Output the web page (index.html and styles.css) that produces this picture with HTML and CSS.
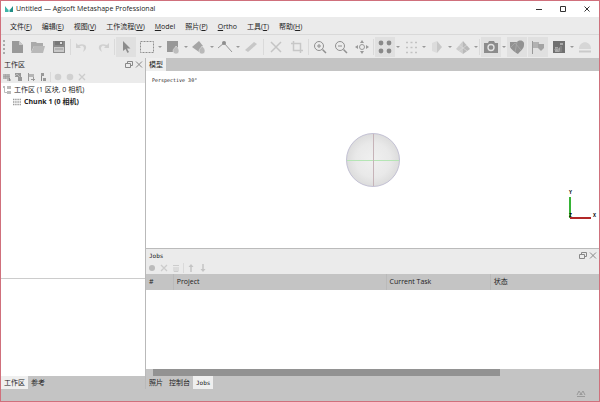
FILE: index.html
```html
<!DOCTYPE html>
<html lang="zh-CN">
<head>
<meta charset="utf-8">
<title>Untitled — Agisoft Metashape Professional</title>
<link rel="stylesheet" href="styles.css">
</head>
<body>
<div class="window">
  <header class="titlebar">
    <svg class="logo" viewBox="0 0 10 8"><path d="M1 2l4 3 4-3v5H1z" fill="#8fd8d0"/><path d="M1 1l3 4v2H1z" fill="#3fb5a8"/><path d="M9 1L6 5v2h3z" fill="#238f87"/></svg>
    <h1>Untitled — Agisoft Metashape Professional</h1>
    <div class="controls">
      <button aria-label="最小化"><svg viewBox="0 0 8 8"><path d="M1 4.500h6"/></svg></button>
      <button aria-label="最大化"><svg viewBox="0 0 8 8"><path d="M1.500 1.500h5v5h-5z"/></svg></button>
      <button aria-label="关闭"><svg viewBox="0 0 8 8"><path d="M1.500 1.500l5 5m0-5l-5 5"/></svg></button>
    </div>
  </header>

  <nav class="menubar">
    <button>文件(<u>F</u>)</button>
    <button>编辑(<u>E</u>)</button>
    <button>视图(<u>V</u>)</button>
    <button>工作流程(<u>W</u>)</button>
    <button><u>M</u>odel</button>
    <button>照片(<u>P</u>)</button>
    <button><u>O</u>rtho</button>
    <button>工具(<u>T</u>)</button>
    <button>帮助(<u>H</u>)</button>
  </nav>

  <div class="toolbar" role="toolbar" aria-label="主工具栏">
    <span class="handle"></span>
    <button class="tool" aria-label="新建"><svg viewBox="0 0 20 20"><path d="M5 4h7l4 4v8H5z" fill="#999"/><path d="M12 4v4h4z" fill="#c8c8c8"/></svg></button>
    <button class="tool" aria-label="打开"><svg viewBox="0 0 20 20"><path d="M3 5h5l1 1h6v3H6l-3 6z" fill="#aaa"/><path d="M6 9h11l-2 7H3z" fill="#b9b9b9"/></svg></button>
    <button class="tool" aria-label="保存"><svg viewBox="0 0 20 20"><path d="M4 4h12v12H4z" fill="#8a8a8a"/><path d="M6 4h8v4H6z" fill="#777"/><path d="M11 5h2v2h-2z" fill="#ddd"/><path d="M5 10h10v5H5z" fill="#c9c9c9"/><path d="M6 12h8" stroke="#999"/></svg></button>
    <span class="sep"></span>
    <button class="tool" aria-label="撤销"><svg viewBox="0 0 20 20"><path d="M4 6v5h5L7.500 9.500c3-2 6 0 3.500 5.500 6-4 3-10-5-7z" fill="#d0d0d0"/></svg></button>
    <button class="tool" aria-label="重做"><svg viewBox="0 0 20 20"><path d="M16 6v5h-5l1.500-1.500c-3-2-6 0-3.500 5.500-6-4-3-10 5-7z" fill="#d0d0d0"/></svg></button>
    <span class="sep"></span>
    <button class="tool on" aria-label="导航"><svg viewBox="0 0 20 20"><path d="M7 4v10l2.500-2 2 4 1.500-1-2-3.500h3.500z" fill="#8c8c8c"/></svg></button>
    <span class="split"><button class="tool" aria-label="矩形选择"><svg viewBox="0 0 20 20"><path d="M3.500 4.500h13v11h-13z" fill="none" stroke="#8f8f8f" stroke-dasharray="2 1"/></svg></button><button class="caret" aria-label="选择选项"></button></span>
    <span class="split"><button class="tool" aria-label="移动区域"><svg viewBox="0 0 20 20"><path d="M4 4h11v7l-3 4H4z" fill="#989898"/><path d="M13 9c2 2 3 3 3 5a3 3 0 0 1-6 0c0-2 2-3 3-5z" fill="#bdbdbd" stroke="#eee" stroke-width=".5"/></svg></button><button class="caret" aria-label="区域选项"></button></span>
    <span class="split"><button class="tool" aria-label="移动对象"><svg viewBox="0 0 20 20"><path d="M3 10l7-6 4 5-4 6z" fill="#a5a5a5"/><path d="M13 9c2 2 3 3 3 5a3 3 0 0 1-6 0c0-2 2-3 3-5z" fill="#b9b9b9" stroke="#eee" stroke-width=".5"/></svg></button><button class="caret" aria-label="对象选项"></button></span>
    <span class="split"><button class="tool" aria-label="绘制折线"><svg viewBox="0 0 20 20"><path d="M3 11l6-5 8 9" fill="none" stroke="#999"/><circle cx="9" cy="6" r="2" fill="#8d8d8d"/></svg></button><button class="caret" aria-label="绘制选项"></button></span>
    <button class="tool" aria-label="标尺"><svg viewBox="0 0 20 20"><path d="M4 13l9-8 3 2-9 8z" fill="#c7c7c7"/></svg></button>
    <span class="sep wide"></span>
    <button class="tool" aria-label="删除选择"><svg viewBox="0 0 20 20"><path d="M5 5l10 10m0-10L5 15" stroke="#c4c4c4" stroke-width="1.500"/></svg></button>
    <button class="tool" aria-label="裁剪"><svg viewBox="0 0 20 20"><path d="M6.500 4v9.500H16M4 6.500h9.500V16" fill="none" stroke="#c7c7c7" stroke-width="1.500"/></svg></button>
    <span class="sep"></span>
    <button class="tool" aria-label="放大"><svg viewBox="0 0 20 20"><g fill="none" stroke="#909090"><circle cx="9" cy="9" r="4.500"/><path d="M12.500 12.500L16 16" stroke-width="1.500"/><path d="M7 9h4M9 7v4"/></g></svg></button>
    <button class="tool" aria-label="缩小"><svg viewBox="0 0 20 20"><g fill="none" stroke="#909090"><circle cx="9" cy="9" r="4.500"/><path d="M12.500 12.500L16 16" stroke-width="1.500"/><path d="M7 9h4"/></g></svg></button>
    <button class="tool" aria-label="重置视图"><svg viewBox="0 0 20 20"><circle cx="10" cy="10" r="2.500" fill="none" stroke="#999"/><path d="M10 3l2 3H8zM10 17l2-3H8zM3 10l3-2v4zM17 10l-3-2v4z" fill="#999"/></svg></button>
    <span class="sep"></span>
    <span class="split"><button class="tool on" aria-label="点云"><svg viewBox="0 0 20 20"><g fill="#898989"><circle cx="6" cy="6" r="2.400"/><circle cx="14" cy="6" r="2.400"/><circle cx="6" cy="14" r="2.400"/><circle cx="14" cy="14" r="2.400"/></g></svg></button><button class="caret" aria-label="点云选项"></button></span>
    <span class="split"><button class="tool" aria-label="密集点云"><svg viewBox="0 0 20 20"><path d="M5 5.500h11M5 10.500h11M5 15.500h11" stroke="#c2c2c2" stroke-width="1.500" stroke-dasharray="2 2.500"/></svg></button><button class="caret" aria-label="密集点云选项"></button></span>
    <span class="split"><button class="tool" aria-label="三维模型"><svg viewBox="0 0 20 20"><path d="M5 6l5-2v12l-5-2z" fill="#dcdcdc"/><path d="M10 4l5 6-5 6z" fill="#c8c8c8"/></svg></button><button class="caret" aria-label="模型选项"></button></span>
    <span class="split"><button class="tool" aria-label="瓦片模型"><svg viewBox="0 0 20 20"><path d="M10 4v13l-7-5z" fill="#ccc"/><path d="M10 4l7 8-7 5z" fill="#b9b9b9"/><path d="M6 8l8 6m0-6l-8 6" stroke="#ddd" stroke-width=".7"/></svg></button><button class="caret" aria-label="瓦片选项"></button></span>
    <span class="sep"></span>
    <span class="split"><button class="tool on" aria-label="显示相机"><svg viewBox="0 0 20 20"><path d="M3 6h4l1-2h5l1 2h3v10H3z" fill="#8c8c8c"/><circle cx="10" cy="10.500" r="3" fill="#8c8c8c" stroke="#e2e2e2" stroke-width="1.400"/></svg></button><button class="caret" aria-label="相机选项"></button></span>
    <button class="tool on" aria-label="显示形状"><svg viewBox="0 0 20 20"><path d="M3 5h7c3-3 8-1 7 3 0 4-4 6-6 9-2-1-8-5-8-8z" fill="#929292"/><path d="M3 11l5-5 6 7M10 5l-2 10" fill="none" stroke="#aaa" stroke-width=".8"/></svg></button>
    <button class="tool on" aria-label="显示标记"><svg viewBox="0 0 20 20"><path d="M4.500 4v13" stroke="#999"/><path d="M5 5h6v6H5z" fill="#b2b2b2"/><path d="M10 7h6v4l-3 3-3-3z" fill="#a3a3a3"/></svg></button>
    <span class="split"><button class="tool" aria-label="显示图像"><svg viewBox="0 0 20 20"><path d="M4 4h12v12H4z" fill="#707070"/><path d="M6 10h3v2l2-2v5H6zM11 6h3v2h-3z" fill="#aaa"/><path d="M5 13l3-2 3 4M12 9v6" fill="none" stroke="#939393"/></svg></button><button class="caret" aria-label="图像选项"></button></span>
    <button class="tool" aria-label="显示轨迹球"><svg viewBox="0 0 20 20"><path d="M4 12c0-9 12-9 12 0z" fill="#d6d6d6"/><path d="M4 14.500h12" stroke="#cacaca" stroke-width="2"/></svg></button>
  </div>

  <main class="content">
    <section class="workspace">
      <div class="pane-head">
        <h2>工作区</h2>
        <div class="dock">
          <button aria-label="浮动"><svg viewBox="0 0 8 8"><path d="M2.500 2.500v-2h5v4h-2M.5 2.500h5v4h-5z"/></svg></button>
          <button aria-label="关闭面板"><svg viewBox="0 0 8 8"><path d="M1 .5l6 6m0-6l-6 6"/></svg></button>
        </div>
      </div>
      <div class="mini-tools">
        <button aria-label="添加堆块"><svg viewBox="0 0 10 10"><path d="M1 2h7v5H1z" fill="#b5b5b5"/><path d="M5 8h4M7.500 6v3" stroke="#888"/><path d="M1 4.500h7M3.500 2v5M6 2v5" stroke="#999" stroke-width=".5"/></svg></button>
        <button aria-label="添加照片"><svg viewBox="0 0 10 10"><path d="M1 1h6v4H1zM4 5h4v4H4z" fill="#989898"/><path d="M1 4l2-2 3 3" stroke="#ccc" stroke-width=".7" fill="none"/></svg></button>
        <button aria-label="添加标记"><svg viewBox="0 0 10 10"><path d="M2.500 1v8" stroke="#999"/><path d="M3 2h5v3H3z" fill="#b5b5b5"/><path d="M5 7.500h4M7.500 5v4" stroke="#999"/></svg></button>
        <button aria-label="添加比例尺"><svg viewBox="0 0 10 10"><path d="M3.500 1v8" stroke="#888"/><path d="M3 1h3v3H3zM5 6h3v3H5z" fill="#999"/></svg></button>
        <span class="sep"></span>
        <button aria-label="启用"><svg viewBox="0 0 10 10"><circle cx="5" cy="5" r="3.300" fill="#d0d0d0"/></svg></button>
        <button aria-label="禁用"><svg viewBox="0 0 10 10"><circle cx="5" cy="5" r="3.300" fill="#d0d0d0"/></svg></button>
        <button aria-label="移除"><svg viewBox="0 0 10 10"><path d="M2 2l6 6m0-6L2 8" stroke="#ccc" stroke-width="1.300"/></svg></button>
      </div>
      <ul class="tree">
        <li><svg viewBox="0 0 10 10"><path d="M1 1h2v2H1zM5 1h4v3H5zM5 6h4v3H5z" fill="#bbb"/><path d="M2.500 3v4.500H5" fill="none" stroke="#bbb"/></svg>工作区 (1 区块, 0 相机)
          <ul><li><svg viewBox="0 0 10 10"><path d="M1 2.500h8M1 5h8M1 7.500h8" stroke="#999" stroke-width="1.300" stroke-dasharray="1.400 .8"/></svg><b>Chunk 1 (0 相机)</b></li></ul>
        </li>
      </ul>
      <div class="details"></div>
      <div class="tabs">
        <button class="active">工作区</button><button>参考</button>
      </div>
    </section>

    <section class="stage">
      <div class="tabs"><button class="active">模型</button></div>
      <div class="viewport">
        <span class="projection">Perspective 30°</span>
        <svg class="ball" viewBox="0 0 56 56">
          <defs><radialGradient id="shade"><stop offset="0" stop-color="#f0f0f0"/><stop offset=".65" stop-color="#e9e9e9"/><stop offset="1" stop-color="#dcdcdc"/></radialGradient></defs>
          <circle cx="28" cy="28" r="26.500" fill="url(#shade)" stroke="#c3c1d4"/>
          <path d="M2 28.500h52" stroke="#b5e5b5"/><path d="M28.500 2v52" stroke="#c6b3b8"/>
        </svg>
        <svg class="axes" viewBox="0 0 30 36">
          <path d="M1 10v21" stroke="#36b336" stroke-width="2"/><path d="M1 31h21" stroke="#b22828" stroke-width="2"/>
          <text x="0" y="7">Y</text><text x="24" y="30">X</text><text x="0" y="30">Z</text>
        </svg>
      </div>
      <div class="jobs">
        <div class="pane-head">
          <h2 class="mono">Jobs</h2>
          <div class="dock">
            <button aria-label="浮动"><svg viewBox="0 0 8 8"><path d="M2.500 2.500v-2h5v4h-2M.5 2.500h5v4h-5z"/></svg></button>
            <button aria-label="关闭面板"><svg viewBox="0 0 8 8"><path d="M1 .5l6 6m0-6l-6 6"/></svg></button>
          </div>
        </div>
        <div class="mini-tools">
          <button aria-label="暂停"><svg viewBox="0 0 10 10"><circle cx="5" cy="5" r="3" fill="#bbb"/></svg></button>
          <button aria-label="取消"><svg viewBox="0 0 10 10"><path d="M2 2l6 6m0-6L2 8" stroke="#ccc" stroke-width="1.300"/></svg></button>
          <button aria-label="清除"><svg viewBox="0 0 10 10"><path d="M2 2.500h6M3 4v4.500h4V4M5 4v4" fill="none" stroke="#ccc"/></svg></button>
          <span class="sep"></span>
          <button aria-label="上移"><svg viewBox="0 0 10 10"><path d="M5 4v5" stroke="#c4c4c4" stroke-width="1.500"/><path d="M5 1l2.500 3h-5z" fill="#c4c4c4"/></svg></button>
          <button aria-label="下移"><svg viewBox="0 0 10 10"><path d="M5 1v5" stroke="#c4c4c4" stroke-width="1.500"/><path d="M5 9l2.500-3h-5z" fill="#c4c4c4"/></svg></button>
        </div>
        <table>
          <thead><tr><th class="c-num">#</th><th class="c-project">Project</th><th class="c-task">Current Task</th><th>状态</th></tr></thead>
        </table>
        <div class="rows"></div>
        <div class="scrollbar"><span class="thumb"></span></div>
      </div>
      <div class="tabs">
        <button>照片</button><button>控制台</button><button class="active mono">Jobs</button>
      </div>
    </section>
  </main>

  <footer class="status">
    <svg viewBox="0 0 10 9"><path d="M1 6l2-4 2 3 2-3 2 4M1 7.500h8M3.500 5.500h3" fill="none" stroke="#999"/></svg>
  </footer>
</div>
</body>
</html>
```
FILE: styles.css
```css
* { box-sizing: border-box; margin: 0; padding: 0; }

body {
  font: 7px/10px "Open Sans", "Noto Sans CJK SC", sans-serif;
  color: #222;
}

button {
  border: 0;
  background: none;
  font: inherit;
  color: inherit;
}

svg { display: block; overflow: visible; }
h1, h2 { font: inherit; }
ul { list-style: none; }

.mono { font-family: "DejaVu Sans Mono", monospace; font-size: 6px; }

.window {
  display: flex;
  flex-direction: column;
  height: 100vh;
  border: 1px solid #d0707c;
  background: #ebebeb;
}

.titlebar {
  display: flex;
  align-items: center;
  gap: 2px;
  height: 16px;
  padding-left: 3px;
  background: #fff;
}
.logo { width: 10px; height: 8px; }
.controls { display: flex; margin-left: auto; }
.controls button { display: grid; place-items: center; width: 24px; height: 16px; }
.controls svg { width: 8px; height: 8px; fill: none; stroke: #333; }

.menubar {
  display: flex;
  gap: 10px;
  height: 18px;
  padding: 2px 9px 0;
  border-bottom: 1px solid #d9d9d9;
}

.toolbar {
  display: flex;
  align-items: center;
  gap: 1px;
  height: 23px;
  padding: 0 2px;
}
.handle { width: 3px; height: 14px; border-left: 2px dotted #aaa; }
.tool { flex: none; width: 20px; height: 20px; }
.tool svg { width: 20px; height: 20px; }
.on { background: #e0e0e0; }
.split { display: flex; flex: none; align-items: center; }
.caret { display: grid; place-items: center; width: 5px; height: 20px; }
.caret::before { content: ""; border: 2px solid transparent; border-top-color: #999; border-bottom: 0; }
.sep { flex: none; width: 1px; height: 16px; background: #dadada; }
.wide { margin: 0 1px; }

.content { display: flex; flex: 1; min-height: 0; }
.workspace, .stage { display: flex; flex-direction: column; min-width: 0; }
.workspace { flex: 144; border-right: 1px solid #b9b9b9; }
.stage { flex: 453; }

.pane-head {
  display: flex;
  align-items: center;
  justify-content: space-between;
  height: 13px;
  padding: 0 2px 0 3px;
}
.dock { display: flex; gap: 2px; }
.dock svg { width: 8px; height: 8px; fill: none; stroke: #888; }

.mini-tools { display: flex; align-items: center; gap: 2px; height: 12px; padding: 0 1px; }
.mini-tools svg { width: 10px; height: 10px; }
.mini-tools .sep { height: 10px; }

.tree { flex: 1; padding: 1px 0 0 1px; background: #fff; }
.tree li { line-height: 12px; }
.tree svg { float: left; width: 10px; height: 10px; margin: 1px 2px 0 0; }
.tree ul { padding-left: 10px; }
.details { height: 98px; border-top: 1px solid #ccc; background: #fff; }

.tabs { display: flex; height: 13px; background: #c4c4c4; }
.tabs button { padding: 0 3px; }
.tabs .active { background: #efefef; }

.viewport { position: relative; flex: 1; background: #fff; }
.projection {
  position: absolute;
  top: 4px;
  left: 6px;
  font: 5px/10px "DejaVu Sans Mono", monospace;
}
.ball { position: absolute; top: 50%; left: 50%; width: 56px; height: 56px; transform: translate(-50%, -50%); }
.axes { position: absolute; right: 0; bottom: 25px; width: 30px; height: 36px; font: bold 5px "Liberation Mono", monospace; }

.jobs { border-top: 1px solid #bbb; }
table { width: 100%; border-collapse: collapse; table-layout: fixed; background: #c4c4c4; }
th { height: 16px; padding-left: 3px; border-right: 1px solid #bababa; font-weight: normal; text-align: left; }
th:last-child { border: 0; }
.c-num { width: 6%; }
.c-project { width: 47%; }
.c-task { width: 23%; }
.rows { height: 79px; background: #fff; }
.scrollbar { height: 7px; padding: 0 99px 0 7px; background: #c4c4c4; }
.thumb { display: block; height: 7px; background: #929292; }

.status { display: flex; justify-content: flex-end; height: 12px; padding: 0 13px; background: #c4c4c4; }
.status svg { width: 10px; height: 9px; }
```
